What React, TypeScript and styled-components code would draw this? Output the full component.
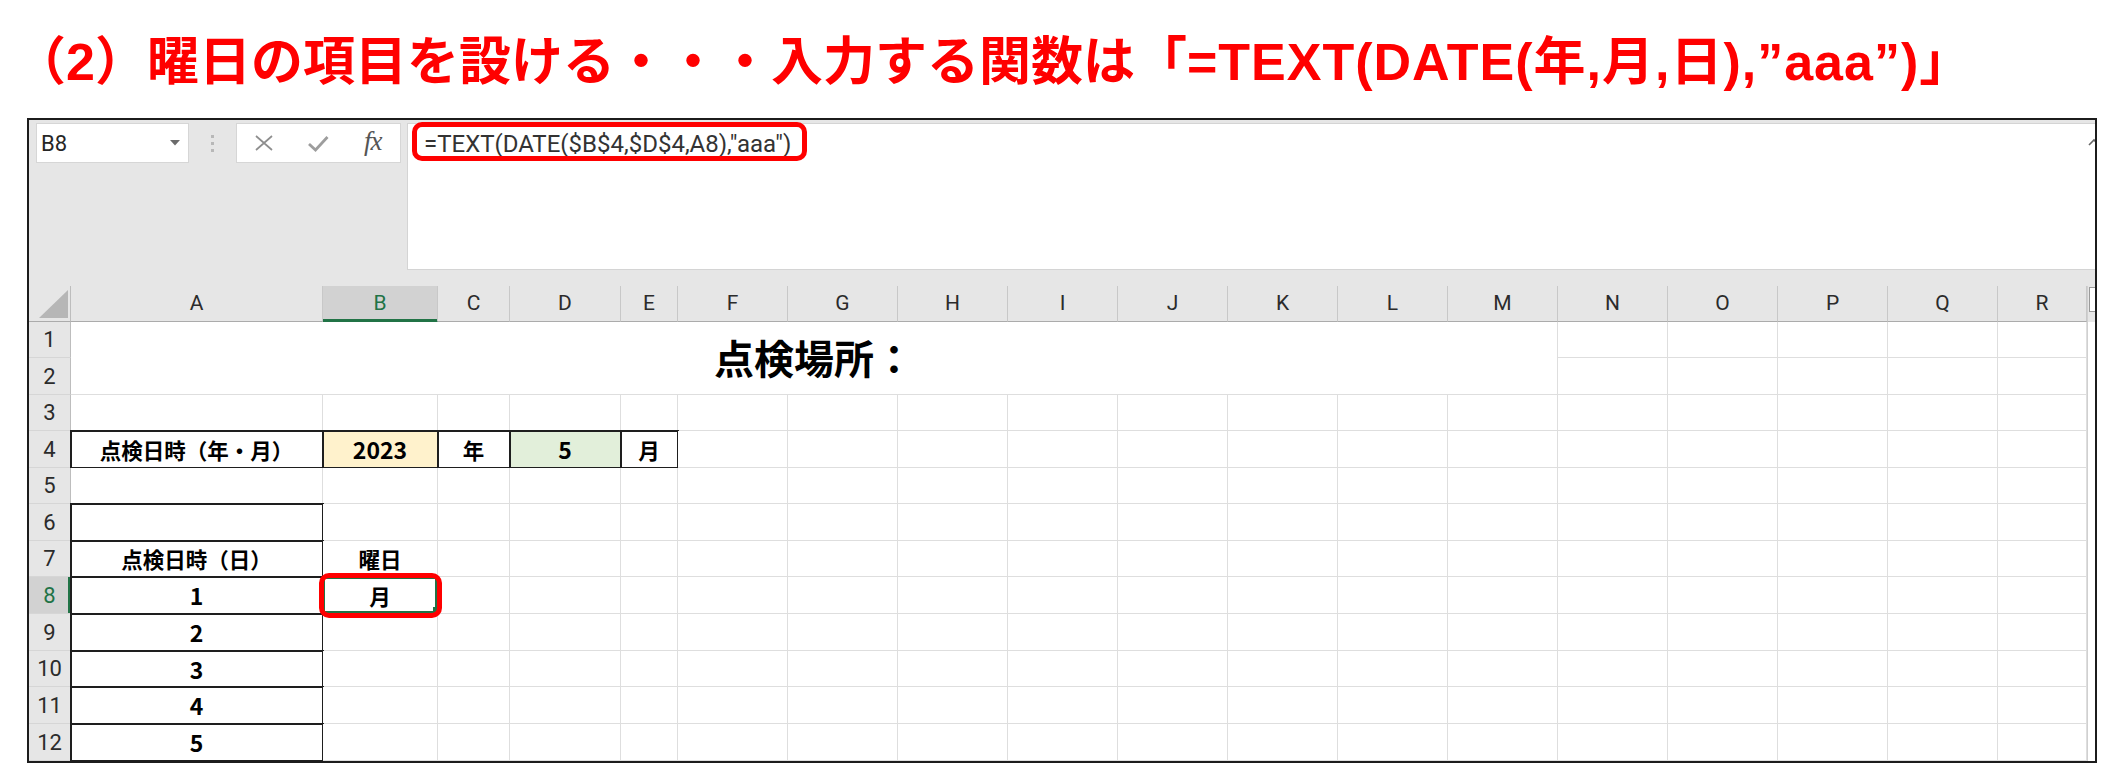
import styled, { createGlobalStyle, css } from "styled-components";

const GlobalStyle = createGlobalStyle`
  html, body {
    margin: 0;
    padding: 0;
    background: #ffffff;
  }
  body {
    font-family: "Noto Sans CJK JP", sans-serif;
    overflow: hidden;
  }
`;

// Sheet geometry
const COLUMNS = "ABCDEFGHIJKLMNOPQR".split("");
const COLUMN_WIDTHS = [252, 115, 72, 111, 57, ...Array(12).fill(110)]; // R takes what is left
const ROW_HEIGHTS = [36, 37, 36, 37, 36, 37, 36, 37, 37, 36, 37, 37];
const ROW_HEAD_WIDTH = 42;
const HEADER_HEIGHT = 36;

const ACTIVE_COL = "B";
const ACTIVE_ROW = 8;

interface CellSpec {
  text?: string;
  size?: number;
  fill?: string;
  boxed?: boolean;
  selected?: boolean;
}

const CELLS: Record<string, CellSpec> = {
  A4: { text: "点検日時（年・月）", boxed: true },
  B4: { text: "2023", size: 23, fill: "#fff2cc", boxed: true },
  C4: { text: "年", boxed: true },
  D4: { text: "5", size: 23, fill: "#e2efda", boxed: true },
  E4: { text: "月", boxed: true },
  A6: { boxed: true },
  A7: { text: "点検日時（日）", boxed: true },
  B7: { text: "曜日" },
  A8: { text: "1", size: 23, boxed: true },
  B8: { text: "月", selected: true },
  A9: { text: "2", size: 23, boxed: true },
  A10: { text: "3", size: 23, boxed: true },
  A11: { text: "4", size: 23, boxed: true },
  A12: { text: "5", size: 23, boxed: true },
};

const Page = styled.div`
  width: 2116px;
  height: 781px;
  display: flex;
  flex-direction: column;
`;

const Heading = styled.h1`
  margin: 0;
  box-sizing: border-box;
  height: 118px;
  padding: 32px 0 0 14px;
  font-family: "Liberation Sans", "Noto Sans CJK JP", sans-serif;
  font-size: 52px;
  line-height: 60px;
  font-weight: 700;
  color: #ff0000;
  white-space: nowrap;
`;

// the function part of the heading sits a little looser than the kana
const HeadingCode = styled.span`
  letter-spacing: 1px;
`;

const Window = styled.div`
  margin-left: 27px;
  width: 2070px;
  height: 645px;
  box-sizing: border-box;
  border: 2px solid #1c1c1c;
  background: #e6e6e6;
  display: flex;
  flex-direction: column;
  overflow: hidden;
`;

/* ---------- formula bar ---------- */

const FormulaBar = styled.div`
  height: 166px;
  box-sizing: border-box;
  padding: 3px 0 16px 7px;
  display: flex;
  align-items: flex-start;
`;

const NameBox = styled.div`
  width: 153px;
  height: 40px;
  box-sizing: border-box;
  background: #ffffff;
  border: 1px solid #d6d6d6;
  display: flex;
  align-items: center;
  justify-content: space-between;
  padding: 0 8px 0 4px;
  font-family: Roboto, "Noto Sans", sans-serif;
  font-size: 22px;
  color: #262626;
`;

const Grip = styled.div`
  width: 47px;
  height: 40px;
  display: flex;
  align-items: center;
  justify-content: center;
`;

const ButtonBox = styled.div`
  width: 165px;
  height: 40px;
  box-sizing: border-box;
  background: #ffffff;
  border: 1px solid #d6d6d6;
  display: grid;
  grid-template-columns: repeat(3, 1fr);
  align-items: center;
  justify-items: center;
`;

const FxLabel = styled.span`
  font-family: "Liberation Serif", serif;
  font-style: italic;
  font-size: 27px;
  color: #555555;
  letter-spacing: -1px;
  line-height: 1;
  margin-top: -3px;
`;

const FormulaPanel = styled.div`
  flex: 1;
  height: 147px;
  margin-left: 6px;
  box-sizing: border-box;
  position: relative;
  background: #ffffff;
  border: 1px solid #d4d4d4;
  border-right: none;
  padding: 6px 0 0 16px;
`;

const FormulaText = styled.span`
  position: relative;
  display: inline-block;
  font-family: Roboto, "Noto Sans", sans-serif;
  font-size: 24px;
  line-height: 28px;
  color: #333333;
  white-space: nowrap;
`;

const Collapse = styled.svg`
  position: absolute;
  top: 14px;
  right: -5px;
`;

/* ---------- annotation overlays ---------- */

const Callout = styled.span<{ $inset: string }>`
  position: absolute;
  inset: ${(p) => p.$inset};
  border: 5px solid #ff0000;
  border-radius: 10px;
  pointer-events: none;
`;

const SelectionFrame = styled.span`
  position: absolute;
  inset: 0;
  border: 2px solid #217346;
  pointer-events: none;
`;

const FillHandle = styled.span`
  position: absolute;
  right: -1px;
  bottom: 1px;
  width: 5px;
  height: 5px;
  background: #217346;
`;

/* ---------- sheet ---------- */

const SheetArea = styled.div`
  flex: 1;
  display: flex;
  min-height: 0;
`;

const SheetGrid = styled.div`
  flex: 1;
  display: grid;
  grid-template-columns: ${ROW_HEAD_WIDTH}px ${COLUMN_WIDTHS.map((w) => `${w}px`).join(" ")} 1fr;
  grid-template-rows: ${HEADER_HEIGHT}px ${ROW_HEIGHTS.map((h) => `${h}px`).join(" ")};
  background: #ffffff;
`;

const Corner = styled.div`
  box-sizing: border-box;
  background: #e6e6e6;
  border-right: 1px solid #bdbdbd;
  border-bottom: 1px solid #ababab;
  display: flex;
  align-items: flex-end;
  justify-content: flex-end;
  padding: 0 2px 3px 0;
`;

const CornerMark = styled.div`
  width: 29px;
  height: 28px;
  background: #b6b6b6;
  clip-path: polygon(100% 0, 100% 100%, 0 100%);
`;

const ColHead = styled.div<{ $active?: boolean }>`
  box-sizing: border-box;
  display: flex;
  align-items: center;
  justify-content: center;
  padding-bottom: 2px;
  background: ${(p) => (p.$active ? "#d2d2d2" : "#e6e6e6")};
  color: ${(p) => (p.$active ? "#217346" : "#2b2b2b")};
  border-right: 1px solid #c8c8c8;
  border-bottom: 1px solid ${(p) => (p.$active ? "#217346" : "#ababab")};
  box-shadow: ${(p) => (p.$active ? "inset 0 -2px 0 #217346" : "none")};
  font-family: Roboto, "Noto Sans", sans-serif;
  font-size: 21px;
`;

const RowHead = styled.div<{ $active?: boolean }>`
  box-sizing: border-box;
  display: flex;
  align-items: center;
  justify-content: center;
  background: ${(p) => (p.$active ? "#d2d2d2" : "#e6e6e6")};
  color: ${(p) => (p.$active ? "#217346" : "#2b2b2b")};
  border-right: 1px solid #bdbdbd;
  border-bottom: 1px solid #d6d6d6;
  box-shadow: ${(p) => (p.$active ? "inset -2px 0 0 #217346" : "none")};
  font-family: Roboto, "Noto Sans", sans-serif;
  font-size: 22px;
`;

const Cell = styled.div<{ $fill?: string; $boxed?: boolean; $size?: number; $selected?: boolean }>`
  box-sizing: border-box;
  display: flex;
  align-items: center;
  justify-content: center;
  min-width: 0;
  background: ${(p) => p.$fill ?? "#ffffff"};
  border-right: 1px solid #dedede;
  border-bottom: 1px solid #dedede;
  font-family: "Noto Sans CJK JP", sans-serif;
  font-weight: 700;
  font-size: ${(p) => p.$size ?? 21.5}px;
  color: #000000;
  white-space: nowrap;
  ${(p) =>
    p.$boxed &&
    css`
      outline: 2px solid #1e1e1e;
      outline-offset: -1px;
    `}
  ${(p) =>
    p.$selected &&
    css`
      position: relative;
    `}
`;

const MergedTitle = styled(Cell)`
  grid-column: span 13;
  grid-row: span 2;
  font-size: 40px;
  padding-bottom: 2px;
`;

const ScrollStrip = styled.div`
  width: 8px;
  box-sizing: border-box;
  display: flex;
  flex-direction: column;
  background: #ffffff;
  border-left: 1px solid #d0d0d0;
`;

const ScrollCap = styled.div`
  height: ${HEADER_HEIGHT}px;
  box-sizing: border-box;
  padding-top: 1px;
  background: #e6e6e6;
`;

const ScrollThumb = styled.div`
  height: 25px;
  margin-left: 1px;
  box-sizing: border-box;
  background: #ffffff;
  border: 1px solid #9a9a9a;
  border-right: none;
`;

/* ---------- small drawings ---------- */

const DropArrow = () => (
  <svg width="10" height="6" viewBox="0 0 10 6">
    <polygon points="0,0 10,0 5,5.5" fill="#6b6b6b" />
  </svg>
);

const GripDots = () => (
  <svg width="3" height="17" viewBox="0 0 3 17">
    <rect x="0" y="0" width="3" height="3" fill="#b8b8b8" />
    <rect x="0" y="7" width="3" height="3" fill="#b8b8b8" />
    <rect x="0" y="14" width="3" height="3" fill="#b8b8b8" />
  </svg>
);

const CancelIcon = () => (
  <svg width="18" height="16" viewBox="0 0 18 16">
    <path d="M1 1 L17 15 M17 1 L1 15" stroke="#8e8e8e" strokeWidth="1.7" fill="none" />
  </svg>
);

const EnterIcon = () => (
  <svg width="22" height="17" viewBox="0 0 22 17">
    <polyline points="2,9 8.5,15 20.5,2" stroke="#9d9d9d" strokeWidth="2.8" fill="none" />
  </svg>
);

const renderRow = (row: number) => {
  const items = [
    <RowHead key={`h${row}`} $active={row === ACTIVE_ROW}>
      {row}
    </RowHead>,
  ];

  COLUMNS.forEach((col, i) => {
    // A1:M2 is one merged block
    if (row <= 2 && i <= 12) {
      if (row === 1 && i === 0) items.push(<MergedTitle key="title">点検場所：</MergedTitle>);
      return;
    }
    const spec = CELLS[`${col}${row}`] ?? {};
    items.push(
      <Cell
        key={`${col}${row}`}
        $fill={spec.fill}
        $boxed={spec.boxed}
        $size={spec.size}
        $selected={spec.selected}
      >
        {spec.text}
        {spec.selected && (
          <>
            <SelectionFrame />
            <FillHandle />
            <Callout $inset="-4px -5px -5px -4px" />
          </>
        )}
      </Cell>
    );
  });

  return items;
};

const App = () => {
  return (
    <Page>
      <GlobalStyle />
      <Heading>
        （2）曜日の項目を設ける・・・入力する関数は「<HeadingCode>=TEXT(DATE(年,月,日),”aaa”)</HeadingCode>」
      </Heading>

      <Window>
        <FormulaBar>
          <NameBox>
            <span>B8</span>
            <DropArrow />
          </NameBox>
          <Grip>
            <GripDots />
          </Grip>
          <ButtonBox>
            <CancelIcon />
            <EnterIcon />
            <FxLabel>fx</FxLabel>
          </ButtonBox>
          <FormulaPanel>
            <FormulaText>
              =TEXT(DATE($B$4,$D$4,A8),"aaa")
              <Callout $inset="-8px -16px -3px -12px" />
            </FormulaText>
            <Collapse width="12" height="8" viewBox="0 0 12 8">
              <path d="M1 7 L6 2 L11 7" stroke="#666666" strokeWidth="1.6" fill="none" />
            </Collapse>
          </FormulaPanel>
        </FormulaBar>

        <SheetArea>
          <SheetGrid>
            <Corner>
              <CornerMark />
            </Corner>
            {COLUMNS.map((col) => (
              <ColHead key={col} $active={col === ACTIVE_COL}>
                {col}
              </ColHead>
            ))}
            {ROW_HEIGHTS.map((_, i) => renderRow(i + 1))}
          </SheetGrid>
          <ScrollStrip>
            <ScrollCap>
              <ScrollThumb />
            </ScrollCap>
          </ScrollStrip>
        </SheetArea>
      </Window>
    </Page>
  );
};

export default App;
